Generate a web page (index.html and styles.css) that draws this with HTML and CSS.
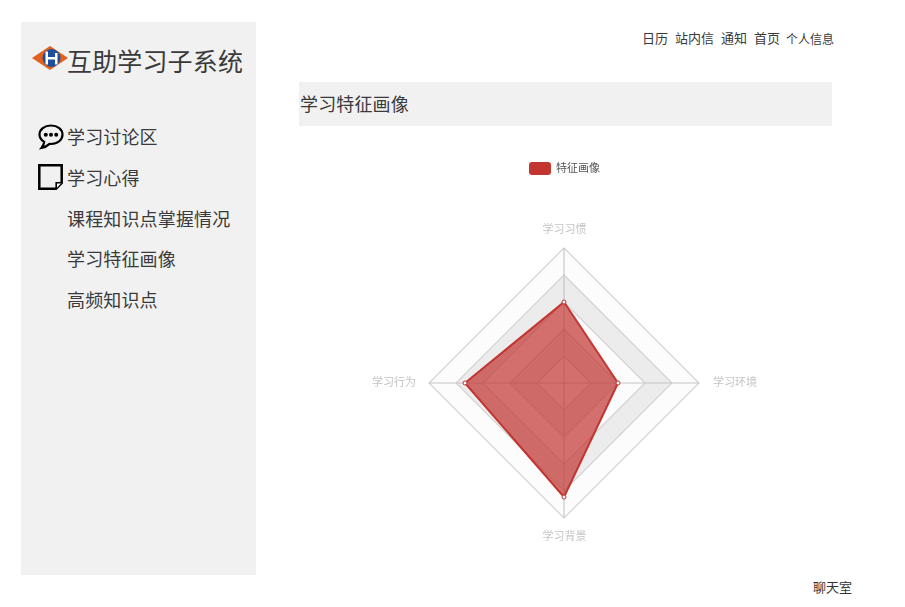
FILE: index.html
```html
<!DOCTYPE html>
<html lang="zh-CN">
<head>
  <meta charset="UTF-8" />
  <meta name="viewport" content="width=device-width, initial-scale=1.0"/>
  <title>学习特征画像</title>
  <link rel="stylesheet" href="styles.css">
</head>
<body>
  <div class="page">
    <aside class="sidebar">
      <div class="brand">
        <svg class="logo" width="36" height="24" viewBox="0 0 36 24">
          <polygon points="0,12 18,0 36,12 18,24" fill="#e2621b"/>
          <circle cx="19.500" cy="12" r="9" fill="#1d4f9c"/>
          <path d="M13.500 5.500V18.500H16V13.500H23V18.500H25.500V7H23V11H16V5.500Z" fill="#fff"/>
        </svg>
        <span class="brand-name">互助学习子系统</span>
      </div>
      <nav class="menu">
        <a class="menu-item first" href="#">
          <svg class="menu-icon" width="26" height="26" viewBox="0 0 26 26">
            <path d="M13 1.500C6.400 1.500 1.500 5.400 1.500 10.600c0 3.100 1.800 5.700 4.700 7.300-.2 2-1 3.900-2.700 6 3.200-.5 6.100-2.100 8-4 .5.100 1 .1 1.500.1 6.600 0 11.500-4.200 11.500-9.400S19.600 1.500 13 1.500z" fill="none" stroke="#000" stroke-width="2.200"/>
            <circle cx="7.800" cy="10.800" r="2"/>
            <circle cx="13" cy="10.800" r="2"/>
            <circle cx="18.200" cy="10.800" r="2"/>
          </svg>
          <span>学习讨论区</span>
        </a>
        <a class="menu-item" href="#">
          <svg class="menu-icon" width="26" height="26" viewBox="0 0 26 26">
            <path d="M1.300 1.300H23.700V19L18 24.700H1.300Z" fill="none" stroke="#000" stroke-width="2.500"/>
            <path d="M23.700 18.800H18.200V24.500" fill="#fff" stroke="#000" stroke-width="1.600"/>
          </svg>
          <span>学习心得</span>
        </a>
        <a class="menu-item sub" href="#">课程知识点掌握情况</a>
        <a class="menu-item sub short" href="#">学习特征画像</a>
        <a class="menu-item sub tall" href="#">高频知识点</a>
      </nav>
    </aside>

    <main class="content">
      <div class="topnav">
        <a href="#">日历</a>
        <a href="#">站内信</a>
        <a href="#">通知</a>
        <a href="#">首页</a>
        <a class="user" href="#">个人信息</a>
      </div>
      <h2 class="panel-title">学习特征画像</h2>
      <svg class="chart" width="533" height="426" viewBox="0 0 533 426">
        <!-- legend -->
        <rect x="230" y="36" width="22" height="13" rx="3" fill="#c23531"/>
        <text class="legend" x="257" y="46">特征画像</text>

        <!-- rings, outside in. centre is 265,257 -->
        <polygon class="ring-light" points="265,122 400,257 265,392 130,257"/>
        <polygon class="ring-dark" points="265,149 373,257 265,365 157,257"/>
        <polygon class="ring-white" points="265,176 346,257 265,338 184,257"/>
        <polygon class="ring-dark" points="265,203 319,257 265,311 211,257"/>
        <polygon class="ring-white" points="265,230 292,257 265,284 238,257"/>
        <path class="axis" d="M265 122V392M130 257H400"/>

        <polygon class="area" points="265,176 319,257 265,371 166,257"/>
        <circle class="dot" cx="265" cy="176" r="2"/>
        <circle class="dot" cx="319" cy="257" r="2"/>
        <circle class="dot" cx="265" cy="371" r="2"/>
        <circle class="dot" cx="166" cy="257" r="2"/>

        <text class="axis-name" x="265.500" y="107" text-anchor="middle">学习习惯</text>
        <text class="axis-name" x="414" y="260">学习环境</text>
        <text class="axis-name" x="265.500" y="414" text-anchor="middle">学习背景</text>
        <text class="axis-name" x="117" y="260" text-anchor="end">学习行为</text>
      </svg>
    </main>
  </div>
  <div class="chat-row">
    <a class="chat" href="#">聊天室</a>
  </div>
</body>
</html>
```

FILE: styles.css
```css
* {
  box-sizing: border-box;
  font-family: "Noto Sans CJK SC", "Noto Sans", sans-serif;
}

html, body {
  margin: 0;
  padding: 0;
  height: 607px;
  overflow: hidden;
  background: #fff;
}

a {
  color: #333;
  text-decoration: none;
}

.page {
  display: flex;
  padding: 22px 0 0 21px;
}

/* ======== SIDEBAR ========= */
.sidebar {
  width: 235px;
  height: 553px;
  background-color: #f1f1f1;
  flex-shrink: 0;
}

.brand {
  display: flex;
  align-items: flex-start;
  padding: 24px 0 0 11px;
  height: 60px;
}

.logo {
  flex-shrink: 0;
}

.brand-name {
  margin-top: -4px;
  margin-left: -1px;
  font-size: 25px;
  line-height: 36px;
  letter-spacing: 0.15px;
  color: #3a3a3a;
  white-space: nowrap;
}

.menu {
  display: flex;
  flex-direction: column;
  padding: 35px 0 0 17px;
}

.menu-item {
  display: flex;
  align-items: center;
  gap: 3px;
  height: 40px;
  font-size: 18px;
  letter-spacing: 0.15px;
  color: #3a3a3a;
  white-space: nowrap;
}

.menu-item.first span {
  margin-top: -2px;
}

.menu-item.sub {
  padding-left: 29px;
  height: 41px;
}

.menu-item.short {
  height: 39px;
}

.menu-item.tall {
  height: 43px;
}

.menu-icon {
  flex-shrink: 0;
}

/* ======== MAIN ========= */
.content {
  width: 533px;
  margin-left: 43px;
}

.topnav {
  display: flex;
  justify-content: flex-end;
  align-items: center;
  gap: 7px;
  height: 32px;
  margin-right: -2px;
  font-size: 13px;
}

.topnav a {
  line-height: 30px;
  color: #3a3a3a;
}

.topnav .user {
  margin-left: -1px;
  font-size: 12px;
  position: relative;
  top: 1px;
}

.panel-title {
  margin: 28px 0 0;
  height: 44px;
  padding-left: 1px;
  background-color: #f1f1f1;
  font-size: 18px;
  font-weight: 400;
  letter-spacing: 0.15px;
  line-height: 43px;
  color: #3a3a3a;
}

.chart {
  display: block;
  margin-top: 0;
  filter: blur(0.3px);
}

.legend {
  font-size: 11px;
  fill: #555;
}

.axis-name {
  font-size: 11px;
  fill: #c4c4c4;
}

.ring-light, .ring-dark, .ring-white {
  stroke: #d0d0d0;
  stroke-width: 1.100;
}

.ring-light {
  fill: #fcfcfc;
}

.ring-dark {
  fill: #ececec;
}

.ring-white {
  fill: #fcfcfc;
}

.axis {
  stroke: #c4c4c4;
  stroke-width: 1.100;
  fill: none;
}

.area {
  fill: rgba(194, 53, 49, 0.7);
  stroke: #c23531;
  stroke-width: 2;
  stroke-linejoin: round;
}

.dot {
  fill: #fff;
  stroke: #c23531;
  stroke-width: 1;
}

/* ======== CHAT ========= */
.chat-row {
  display: flex;
  justify-content: flex-end;
  padding: 2px 53px 0 0;
}

.chat {
  font-size: 13px;
  line-height: 20px;
}
```
